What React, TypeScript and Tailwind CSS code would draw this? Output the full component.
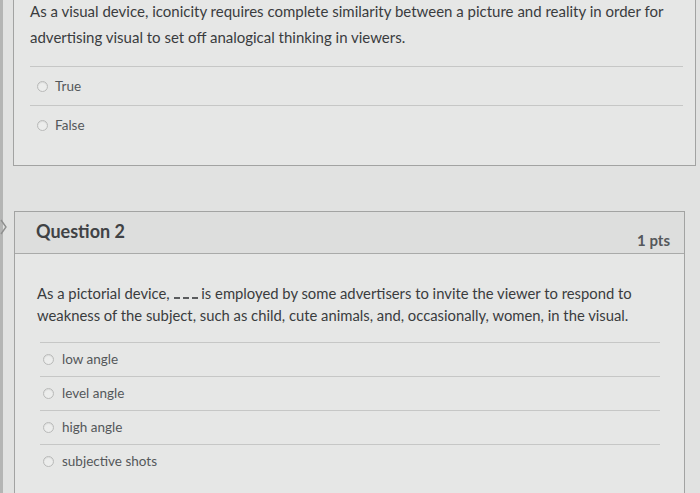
import React from "react";

type Option = { label: string };

function Radio() {
  return (
    <span className="inline-block w-[11px] h-[11px] rounded-full border border-[#b9bab9] bg-[#ecedec] shadow-[inset_0_1px_1px_rgba(0,0,0,0.08)]" />
  );
}

function AnswerRow({ label, height, gap, indent }: { label: string; height: string; gap: string; indent: string }) {
  return (
    <div className={`flex items-center border-t border-[#c6c7c6] ${height} ${indent}`}>
      <Radio />
      <span className={`${gap} text-[13.5px] text-[#54575a]`}>{label}</span>
    </div>
  );
}

export default function App() {
  const q1: Option[] = [{ label: "True" }, { label: "False" }];
  const q2: Option[] = [
    { label: "low angle" },
    { label: "level angle" },
    { label: "high angle" },
    { label: "subjective shots" },
  ];

  return (
    <div className="relative w-[700px] h-[493px] overflow-hidden bg-[#e1e2e1] font-['Lato',sans-serif] flex">
      {/* dark edge of the screen */}
      <div className="w-[3px] shrink-0 bg-[#b4b5b4]" />

      {/* collapse chevron peeking in on the left */}
      <svg className="absolute left-0 top-[219px]" width="8" height="16" viewBox="0 0 8 16">
        <polyline points="1,1 6,8 1,15" fill="none" stroke="#8e8f8e" strokeWidth="1.4" />
      </svg>

      <div className="flex flex-col pl-[10px]">
        {/* Question 1 (scrolled, top cut off) */}
        <div className="-mt-[2px] w-[683px] border border-t-0 border-[#a2a3a2] bg-[#e6e7e6] pl-[16px] pr-[12px] pb-[21px]">
          <p className="text-[15px] leading-[26px] text-[#3a3c3e] whitespace-nowrap">
            As a visual device, iconicity requires complete similarity between a picture and reality in order for
            <br />
            advertising visual to set off analogical thinking in viewers.
          </p>
          <div className="mt-[16px]">
            {q1.map((o) => (
              <AnswerRow key={o.label} label={o.label} height="h-[39px]" gap="ml-[7px]" indent="pl-[7px]" />
            ))}
          </div>
        </div>

        {/* Question 2 */}
        <div className="mt-[45px] ml-[1px] w-[671px] border border-[#a2a3a2] bg-[#e6e7e6]">
          <div className="h-[42px] flex items-start justify-between pl-[21px] pr-[14px] pt-[5px] bg-[#dddedd] border-b border-[#a9aaa9]">
            <h2 className="text-[18px] leading-[28px] font-bold text-[#404245]">Question 2</h2>
            <span className="text-[15px] leading-[22px] font-bold text-[#55585b] mt-[12px]">1 pts</span>
          </div>
          <div className="pt-[28px] px-[22px]">
            <p className="text-[14.8px] leading-[22px] text-[#3a3c3e] whitespace-nowrap">
              As a pictorial device,{" "}
              <span className="inline-block w-[24px] border-b-2 border-dashed border-[#5a5c5e] align-baseline" /> is
              employed by some advertisers to invite the viewer to respond to
              <br />
              weakness of the subject, such as child, cute animals, and, occasionally, women, in the visual.
            </p>
          </div>
          <div className="mt-[16px] ml-[25px] mr-[24px] pb-[20px]">
            {q2.map((o) => (
              <AnswerRow key={o.label} label={o.label} height="h-[34px]" gap="ml-[8px]" indent="pl-[3px]" />
            ))}
          </div>
        </div>
      </div>
    </div>
  );
}
